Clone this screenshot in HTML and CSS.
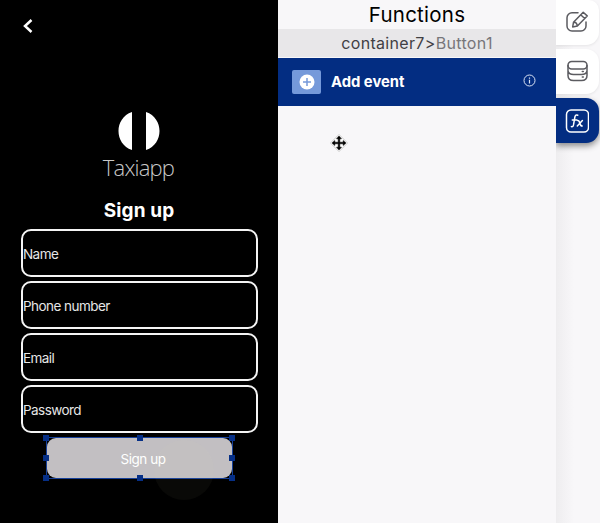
FILE: index.html
```html
<!DOCTYPE html>
<html lang="en">
<head>
<meta charset="utf-8">
<title>Functions</title>
<link rel="stylesheet" href="styles.css">
</head>
<body>
<main class="editor">
  <section class="phone">
    <svg class="back" width="10" height="14" viewBox="0 0 10 14"><path d="M8.500 1 2 7l6.500 6" fill="none" stroke="#fff" stroke-width="2.500"/></svg>
    <div class="brand">
      <svg width="42" height="38" viewBox="0 0 42 38"><path d="M14 0v38C5 35 .5 27 .5 19S5 3 14 0ZM28 0v38c9-3 13.500-11 13.500-19S37 3 28 0Z" fill="#fff"/></svg>
      <span class="brand-name">Taxiapp</span>
    </div>
    <h1 class="title"><span>Sign up</span></h1>
    <div class="fields">
      <div class="field"><span>Name</span></div>
      <div class="field"><span>Phone number</span></div>
      <div class="field"><span>Email</span></div>
      <div class="field"><span>Password</span></div>
    </div>
    <div class="selection">
      <div class="submit"><span>Sign up</span></div>
      <i class="touch"></i>
      <i class="handle tl"></i><i class="handle tc"></i><i class="handle tr"></i>
      <i class="handle ml"></i><i class="handle mr"></i>
      <i class="handle bl"></i><i class="handle bc"></i><i class="handle br"></i>
    </div>
  </section>
  <section class="panel">
    <h2 class="heading"><span>Functions</span></h2>
    <div class="path"><span class="container">container7&gt;</span><span class="leaf">Button1</span></div>
    <div class="event">
      <div class="add"><svg width="16" height="16" viewBox="0 0 16 16"><circle cx="8" cy="8" r="7.500" fill="#fff"/><path d="M8 4v8M4 8h8" stroke="#7599da" stroke-width="1.500"/></svg></div>
      <span class="event-name">Add event</span>
      <svg class="info" width="13" height="13" viewBox="0 0 13 13"><circle cx="6.500" cy="6.500" r="5.500" fill="none" stroke="#dce4f5" stroke-width="1"/><path d="M6.500 5.700V9.500M6.500 3.500v1.200" stroke="#dce4f5" stroke-width="1.200"/></svg>
    </div>
    <svg class="cursor" width="18" height="18" viewBox="0 0 18 18"><path d="M9 .5 17.500 9 9 17.500.5 9Z" fill="#fff" stroke="#bbb" stroke-width=".8"/><path d="M9 2l2.500 2.800H9.800v3.400h3.400V6.500L16 9l-2.800 2.500V9.800H9.800v3.400h1.700L9 16l-2.500-2.800h1.700V9.800H4.800v1.700L2 9l2.800-2.500v1.700h3.400V4.800H6.500Z" fill="#000" stroke="#000" stroke-width=".5"/></svg>
  </section>
  <nav class="rail">
    <div class="tab"><svg width="24" height="24" viewBox="0 0 24 24" fill="none" stroke="#5b5b60" stroke-width="1.500" stroke-linecap="round" stroke-linejoin="round"><path d="M13 2.700H7a5 5 0 0 0-5 5V16a5 5 0 0 0 5 5h9a5 5 0 0 0 5-5v-4"/><path d="m8.500 12.300 9.700-10.100 4 3.700-9.800 10.200-4.700.8ZM15.700 4.800l4 3.700M8.500 12.300c2-.3 3.500 1.500 3.900 3.800"/></svg></div>
    <div class="tab"><svg width="24" height="24" viewBox="0 0 24 24" fill="none" stroke="#5b5b60" stroke-width="1.500" stroke-linecap="round"><rect x="3" y="1.500" width="19" height="7.500" rx="3.700"/><path d="M3 5.500v10c0 3.500 2.500 5 5.500 5h8c3 0 5.500-1.500 5.500-5v-10M3 11c.5 2.500 2.500 3.500 5.500 3.500h8c3 0 5-1 5.500-3.500M17.300 11.500h1M17.300 17h1"/></svg></div>
    <div class="tab active"><svg width="24" height="24" viewBox="0 0 24 24" fill="none" stroke="#fff" stroke-width="1.500" stroke-linecap="round" stroke-linejoin="round"><rect x="1.500" y="1" width="22" height="22" rx="4.500"/><path d="M12.800 6.200c-1.500-.7-2.600 0-2.900 1.700l-1.400 8c-.3 1.500-1 2.100-2.100 1.700M7.300 10.900h4.500M12.700 11.500c1.500 0 1.700.8 2.100 2.500.4 2 .8 3 2.400 3M17.400 11.500 12.300 17"/></svg></div>
  </nav>
</main>
</body>
</html>
```

FILE: styles.css
```css
* { box-sizing: border-box; }
body { margin: 0; overflow: hidden; font-family: Inter, "Liberation Sans", sans-serif; }
.editor { display: grid; grid-template-columns: 278px 278px 44px; width: 600px; height: 523px; background: #f7f6f8; }
h1, h2 { margin: 0; }
svg { display: block; flex: none; }
span { white-space: nowrap; }

.phone { background: #000; color: #fff; padding: 19px 20px 0 21px; }
.back { margin-left: 2px; }
.brand { display: flex; flex-direction: column; align-items: center; margin: 79px 2px 0 0; height: 72px; }
.brand-name { font: 300 22px/25px "Open Sans", sans-serif; margin-top: 5px; letter-spacing: -0.8px; color: #c8c8c8; }
.title { display: flex; justify-content: center; height: 28px; margin: 13px 1px 0 0; font-size: 19px; line-height: 28px; font-weight: 700; letter-spacing: 0.1px; }
.fields { display: grid; grid-auto-rows: 48px; gap: 4px; margin-top: 4px; }
.field { display: flex; align-items: center; border: 2px solid #f4f4f4; border-radius: 10px; font-size: 13.500px; color: #e6e6e6; padding-top: 2px; letter-spacing: -0.55px; }
.selection { position: relative; width: 187px; height: 42px; margin: 4px 0 0 25px; border: 1px solid #164099; }
.submit { display: flex; align-items: center; justify-content: center; height: 40px; background: #c2bfc2; border-radius: 9px; font-size: 13.500px; padding: 1px 0 0 7px; letter-spacing: -0.45px; }
.handle { position: absolute; width: 6px; height: 6px; background: #062f86; }
.tl, .tc, .tr { top: -3px; }
.ml, .mr { top: 17px; }
.bl, .bc, .br { bottom: -3px; }
.tl, .ml, .bl { left: -4px; }
.tc, .bc { left: 90px; }
.tr, .mr, .br { right: -3px; }
.touch { position: absolute; left: 107px; top: 2px; width: 60px; height: 60px; border-radius: 50%; background: rgba(228, 218, 185, .04); }

.panel { position: relative; background: #f8f7f9; }
.heading { display: flex; align-items: center; justify-content: center; height: 29px; font-size: 20.500px; font-weight: 400; color: #000; letter-spacing: 0.25px; }
.path { display: flex; align-items: center; justify-content: center; height: 28px; background: #e8e7e9; font-size: 16px; letter-spacing: 0.33px; color: #414044; }
.leaf { color: #77767a; }
.event { display: flex; align-items: center; height: 48px; margin-top: 1px; padding: 0 20px 0 14px; background: #032d82; color: #fff; }
.add { display: flex; align-items: center; justify-content: center; width: 29px; height: 24px; background: #7599da; border-radius: 2px; }
.event-name { margin: -1px 0 0 10px; font-size: 14.800px; font-weight: 700; letter-spacing: 0; }
.info { margin: -3px 0 0 auto; }
.cursor { position: absolute; left: 52px; top: 134px; }

.rail { display: flex; flex-direction: column; gap: 4px; background: linear-gradient(90deg, #eeedef, #f8f7f9 18px); }
.tab { display: flex; align-items: center; width: 43px; height: 45px; padding-left: 9px; background: #fff; border-radius: 0 13px 13px 0; box-shadow: 0 1px 3px #00000014; }
.tab:first-child { padding-bottom: 1px; border-top-right-radius: 10px; }
.tab.active { background: #032d82; box-shadow: 0 3px 6px #00000070; }
```
